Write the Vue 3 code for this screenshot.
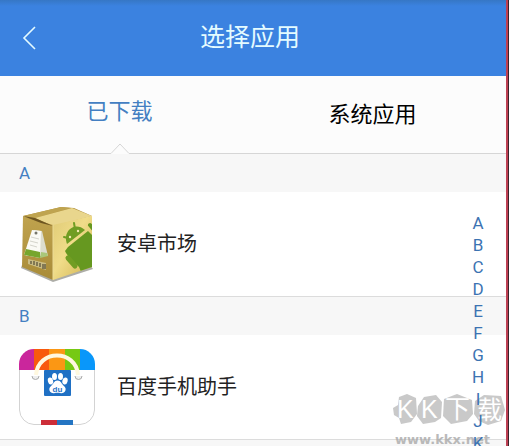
<script setup>
import { ref, computed } from "vue";

const tabs = [
    { id: "downloaded", title: "已下载" },
    { id: "system", title: "系统应用" },
];
const activeTab = ref("downloaded");

const apps = ref([
    { id: 1, letter: "A", name: "安卓市场", icon: "market" },
    { id: 2, letter: "B", name: "百度手机助手", icon: "baidu" },
]);

const letters = "ABCDEFGHIJK".split("");

// группируем приложения по первой букве
const groups = computed(() => {
    const result = [];
    apps.value.forEach((app) => {
        const group = result.find((g) => g.letter === app.letter);
        if (group) group.items.push(app);
        else result.push({ letter: app.letter, items: [app] });
    });
    return result;
});
</script>

<template>
    <div class="screen">
        <header class="top-bar">
            <button class="back" aria-label="返回">
                <svg width="14" height="24" viewBox="0 0 14 24">
                    <path d="M13 1L2 12L13 23" fill="none" stroke="#e4fbff" stroke-width="1.6" />
                </svg>
            </button>
            <h1>选择应用</h1>
        </header>

        <nav class="tabs">
            <button
                v-for="tab in tabs"
                :key="tab.id"
                class="tab"
                :class="{ active: activeTab === tab.id }"
                @click="activeTab = tab.id"
            >
                <span>{{ tab.title }}</span>
                <svg v-if="activeTab === tab.id" class="notch" width="20" height="11" viewBox="0 0 20 11">
                    <path d="M0 11V10.5L10 1L20 10.5V11Z" fill="#fcfcfc" />
                    <path d="M0 10.5H1L10 1L19 10.5H20" fill="none" stroke="#d6d6d6" />
                </svg>
            </button>
        </nav>

        <main class="list">
            <section v-for="group in groups" :key="group.letter" class="group">
                <h2>{{ group.letter }}</h2>
                <div v-for="app in group.items" :key="app.id" class="app-row">
                    <svg v-if="app.icon === 'market'" class="app-icon" viewBox="0 0 76 76">
                        <defs>
                            <linearGradient id="boxFront" x1="0" y1="0" x2="1" y2="1">
                                <stop offset="0" stop-color="#e0cb77" />
                                <stop offset=".45" stop-color="#f0dc89" />
                                <stop offset="1" stop-color="#d0b24e" />
                            </linearGradient>
                            <linearGradient id="boxSide" x1="0" y1="0" x2="0" y2="1">
                                <stop offset="0" stop-color="#c0a34e" />
                                <stop offset="1" stop-color="#a88b38" />
                            </linearGradient>
                            <clipPath id="frontClip">
                                <path d="M34 19L73 10V61L34 74Z" />
                            </clipPath>
                        </defs>
                        <path d="M2 62L34 76L74 63L71 59L34 71L3 59Z" fill="#77766c" opacity=".6" />
                        <path d="M4 10L42 1L55 2L73 10L34 20Z" fill="#b1913c" />
                        <path d="M4 10L42 1L52 2L16 12Z" fill="#bfa450" />
                        <path d="M16 12L53 2L73 10L34 20Z" fill="#e9d68d" />
                        <path d="M4 10L34 19V74L3 61Z" fill="url(#boxSide)" />
                        <path d="M34 19L73 10V61L34 74Z" fill="url(#boxFront)" />
                        <path d="M4 10L16 12L34 20L22 17Z" fill="#6d5521" />
                        <path d="M34 19V74" stroke="#ecdc98" />
                        <path d="M15 24L23 25L29 50L7 50Z" fill="#dcdccf" />
                        <path d="M13 24L22 25L21 52L5 49Z" fill="#fafaf5" />
                        <path d="M7 43L21 46L21 52L5 49Z" fill="#76a62d" />
                        <path d="M22 46L28 47L29 50L21 52Z" fill="#a9c779" />
                        <path d="M12 31L20 33M11 35L19 37M11 39L18 41" stroke="#d4d4cb" />
                        <circle cx="17" cy="27" r="1.5" fill="#76766b" />
                        <path d="M9 53L27 57V64L9 58Z" fill="#c9bc84" />
                        <path d="M12 55V58M15 55V59M18 56V60M21 57V61M24 58V63M26 58V63" stroke="#534c36" stroke-width="1.2" />
                        <g clip-path="url(#frontClip)">
                            <path d="M48 38C43 25 56 15 66 24Z" fill="#719d23" />
                            <path d="M55 17L56 23M45 31L49 32" stroke="#719d23" stroke-width="2" stroke-linecap="round" />
                            <circle cx="51" cy="31" r="1.2" fill="#f5e9b3" />
                            <circle cx="59" cy="25" r="1.2" fill="#f5e9b3" />
                            <path d="M49 41L69 25L76 32V62L63 68L60 61C56 57 48 50 46 45Z" fill="#669820" />
                            <path d="M49 52L56 60" stroke="#719d23" stroke-width="5" stroke-linecap="round" />
                            <path d="M71 19L76 25" stroke="#669820" stroke-width="4" stroke-linecap="round" />
                        </g>
                    </svg>

                    <svg v-else class="app-icon" viewBox="0 0 76 76">
                        <defs>
                            <clipPath id="bagClip">
                                <rect width="76" height="76" rx="15" />
                            </clipPath>
                        </defs>
                        <g clip-path="url(#bagClip)">
                            <rect width="76" height="76" fill="#fff" />
                            <rect width="15" height="21" fill="#ca269c" />
                            <rect x="15" width="15" height="21" fill="#f85a0d" />
                            <rect x="30" width="16" height="21" fill="#fb9714" />
                            <rect x="46" width="15" height="21" fill="#76c913" />
                            <rect x="61" width="15" height="21" fill="#0997fa" />
                            <rect x="22" y="71" width="16" height="5" fill="#cc2d38" />
                            <rect x="38" y="71" width="16" height="5" fill="#2475c3" />
                        </g>
                        <path d="M.5 21V61A15 15 0 0 0 15 75.5H22M54 75.5H61A15 15 0 0 0 75.5 61V21" fill="none" stroke="#d3d3d3" />
                        <path d="M13 27A3.5 3.5 0 1 0 20 27M56 27A3.5 3.5 0 1 0 63 27" fill="#eee" stroke="#aaa" />
                        <path d="M17 26C19 0 57 0 59 26" fill="none" stroke="#fff8df" stroke-width="4" />
                        <rect x="25" y="21" width="27" height="26" rx="1" fill="#1f70c4" />
                        <g fill="#fff">
                            <ellipse cx="31.500" cy="32" rx="2.600" ry="3.500" transform="rotate(-15 31.5 32)" />
                            <ellipse cx="35.500" cy="27.500" rx="2.500" ry="3.500" />
                            <ellipse cx="41.500" cy="27.500" rx="2.500" ry="3.500" />
                            <ellipse cx="46" cy="32" rx="2.600" ry="3.500" transform="rotate(15 46 32)" />
                            <path d="M38.500 31.500C42 31.500 42.500 35 45 37C48.500 40 46 44.500 42 44.200C39 43.600 38 43.600 35 44.200C31 44.500 28.500 40 32 37C34.500 35 35 31.500 38.500 31.500Z" />
                        </g>
                        <text x="38.500" y="42.500" text-anchor="middle" class="bag-text">du</text>
                    </svg>
                    <span class="app-name">{{ app.name }}</span>
                </div>
            </section>
        </main>

        <div class="watermark">
            <svg width="112" height="32" viewBox="0 0 112 32">
                <g fill="#bcbcbc">
                    <path d="M0 14L5 11L6 3L14 0L23 4L24 20L18 28L8 30L6 24L1 21Z" />
                    <path d="M25 12L31 3L43 1L49 8L48 24L42 28L30 30L24 22Z" />
                    <path d="M51 5L64 0L79 6L80 20L74 27L58 30L50 22Z" />
                    <path d="M82 7L91 1L108 2L112 16L108 27L95 31L86 27L81 20Z" />
                </g>
                <g class="mark-text">
                    <text x="4" y="24">K</text>
                    <text x="28" y="24">K</text>
                    <text x="52" y="24">下</text>
                    <text x="84" y="25">载</text>
                </g>
            </svg>
            <span class="site">www.kkx.net</span>
        </div>

        <nav class="index" aria-label="索引">
            <a v-for="letter in letters" :key="letter" href="#">{{ letter }}</a>
        </nav>
    </div>
</template>

<style>
body {
    margin: 0;
    background: #39222b;
}
</style>

<style scoped>
.screen {
    position: relative;
    box-sizing: border-box;
    height: 100vh;
    margin-right: 1px;
    border-right: 2px solid #bd4053;
    overflow: hidden;
    background: #f7f7f7;
    font-family: Roboto, "Noto Sans CJK SC", sans-serif;
}

button {
    border: none;
    padding: 0;
    background: none;
    font-family: inherit;
    cursor: pointer;
}

.top-bar {
    display: grid;
    grid-template-columns: 58px 1fr 64px;
    align-items: center;
    height: 76px;
    background: linear-gradient(#3677c5, #3b82e0 6px);
}

.back {
    display: flex;
    align-items: center;
    justify-content: center;
    height: 100%;
}

.top-bar h1 {
    margin: 0;
    text-align: center;
    font-size: 25px;
    line-height: 36px;
    font-weight: 400;
    color: #e4fbff;
}

.tabs {
    display: grid;
    grid-template-columns: 1fr 1fr;
    height: 77px;
    background: #fcfcfc;
    border-bottom: 1px solid #d6d6d6;
}

.tab {
    position: relative;
    display: flex;
    align-items: center;
    justify-content: center;
    padding-right: 14px;
    font-size: 22px;
    line-height: 32px;
    color: #000;
}

.tab.active {
    padding-bottom: 6px;
    color: #447fc2;
}

.notch {
    position: absolute;
    bottom: -1px;
    left: calc(50% - 17px);
}

.group {
    border-bottom: 1px solid #dcdcdc;
    background: #fff;
}

.group h2 {
    margin: 0;
    padding-left: 19px;
    background: #f7f7f7;
    font-size: 17px;
    line-height: 38px;
    font-weight: 400;
    color: #447fc2;
}

.app-row {
    display: flex;
    align-items: center;
    gap: 22px;
    height: 104px;
    padding-left: 19px;
}

.app-icon {
    width: 76px;
    height: 76px;
}

.bag-text {
    font: bold 8px "Liberation Sans", sans-serif;
    fill: #1f70c4;
}

.app-name {
    font-size: 20px;
    line-height: 30px;
    color: #222;
}

.index {
    position: absolute;
    top: 212px;
    right: 18px;
    display: flex;
    flex-direction: column;
    width: 20px;
    text-align: center;
}

.index a {
    font-size: 17px;
    line-height: 22px;
    color: #3c73b2;
    text-decoration: none;
}

.watermark {
    position: absolute;
    right: 0;
    bottom: -4px;
    display: flex;
    flex-direction: column;
    gap: 4px;
    width: 113px;
    opacity: 0.8;
    pointer-events: none;
}

.mark-text {
    font-family: "Liberation Sans", "Noto Sans CJK SC", sans-serif;
    font-size: 25px;
    fill: #fff;
}

.site {
    padding-left: 2px;
    font-family: "DejaVu Sans", sans-serif;
    font-size: 13px;
    line-height: 20px;
    font-weight: 700;
    color: #aaa;
}
</style>
